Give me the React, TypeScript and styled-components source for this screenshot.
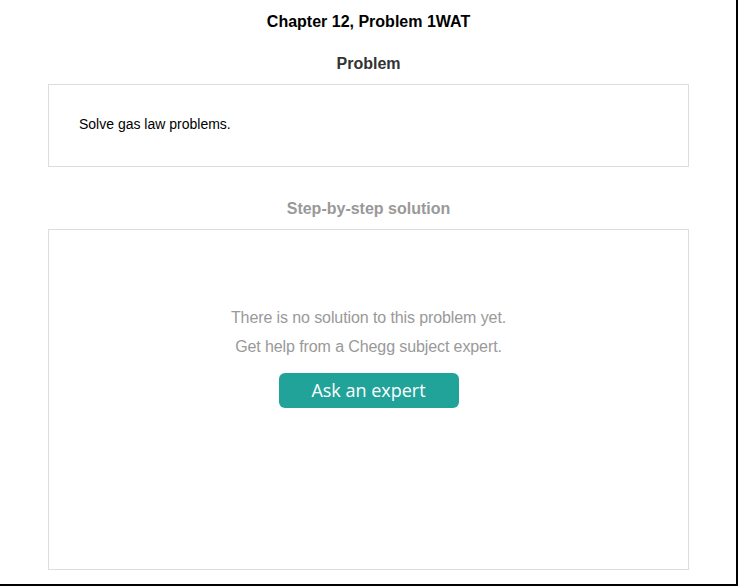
import React from "react";
import styled, { createGlobalStyle } from "styled-components";

const Global = createGlobalStyle`
  html, body { margin: 0; padding: 0; background: #fff; }
  body { font-family: "Liberation Sans", Arial, sans-serif; }
`;

const Page = styled.div`
  box-sizing: border-box;
  width: 738px;
  height: 586px;
  border-right: 2px solid #000;
  border-bottom: 2px solid #000;
  display: flex;
  flex-direction: column;
  align-items: stretch;
  padding: 0 47px 0 48px;
`;

const Title = styled.h1`
  margin: 12px 0 0;
  font-size: 16px;
  line-height: 19px;
  font-weight: bold;
  color: #000;
  text-align: center;
`;

const SectionHeading = styled.h2<{ $muted?: boolean }>`
  margin: ${(p) => (p.$muted ? "32px" : "23px")} 0 11px;
  font-size: 16px;
  line-height: 19px;
  font-weight: bold;
  color: ${(p) => (p.$muted ? "#999" : "#333")};
  text-align: center;
`;

const Card = styled.div<{ $height: number }>`
  box-sizing: border-box;
  height: ${(p) => p.$height}px;
  border: 1px solid #ddd;
`;

const ProblemCard = styled(Card)`
  padding: 30px 30px;
`;

const ProblemText = styled.p`
  margin: 0;
  font-size: 14px;
  line-height: 18px;
  color: #000;
`;

const EmptyCard = styled(Card)`
  display: flex;
  flex-direction: column;
  align-items: center;
  padding-top: 73px;
`;

const EmptyText = styled.p`
  margin: 0;
  font-size: 16px;
  letter-spacing: -0.1px;
  line-height: 29px;
  color: #999;
  text-align: center;
`;

const AskButton = styled.button`
  margin-top: 12px;
  width: 180px;
  height: 35px;
  border: none;
  border-radius: 6px;
  background: #21a39a;
  color: #fff;
  font-family: "Open Sans", "Noto Sans", sans-serif;
  font-size: 18px;
  line-height: 35px;
  padding: 0;
  cursor: pointer;
`;

export default function App() {
  return (
    <>
      <Global />
      <Page>
        <Title>Chapter 12, Problem 1WAT</Title>
        <SectionHeading>Problem</SectionHeading>
        <ProblemCard $height={83}>
          <ProblemText>Solve gas law problems.</ProblemText>
        </ProblemCard>
        <SectionHeading $muted>Step-by-step solution</SectionHeading>
        <EmptyCard $height={341}>
          <EmptyText>There is no solution to this problem yet.</EmptyText>
          <EmptyText>Get help from a Chegg subject expert.</EmptyText>
          <AskButton>Ask an expert</AskButton>
        </EmptyCard>
      </Page>
    </>
  );
}
